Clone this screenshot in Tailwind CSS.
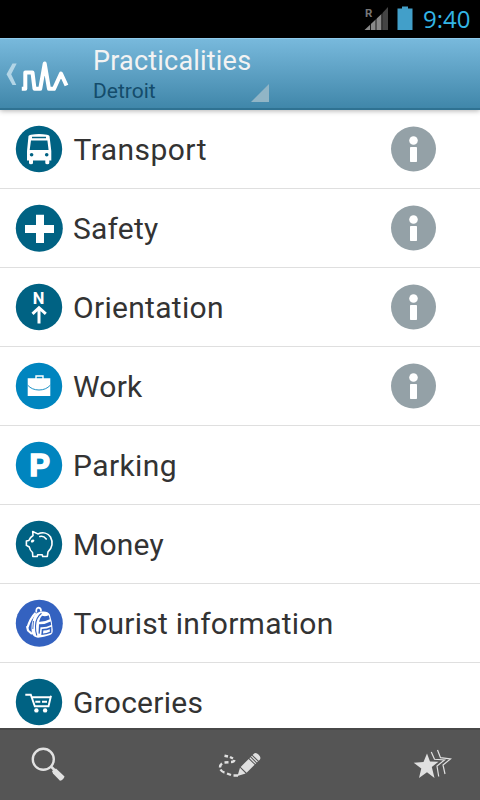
<!DOCTYPE html>
<html lang="en">
<head>
<meta charset="utf-8">
<title>Practicalities</title>
<script src="https://cdn.jsdelivr.net/npm/@tailwindcss/browser@4"></script>
</head>
<body class="bg-white">
<div class="flex h-[800px] w-[480px] flex-col overflow-hidden bg-white font-[Roboto,sans-serif] text-[#333]">
  <div class="flex h-[38px] shrink-0 items-center justify-end bg-black pr-[9px]">
    <svg class="h-[38px] w-[60px]" viewBox="360 0 60 38">
      <text x="365" y="17" font-family="Roboto" font-weight="700" font-size="11.500" fill="#777">R</text>
      <path d="M364.500 30L382 13.500V30Z" fill="#888"/><path d="M382 13.500L388 7V30H382Z" fill="#444"/>
      <path d="M370.500 20v11M376 15v16M381.800 9v22" stroke="#000" stroke-width=".8"/>
      <path d="M397.500 8.500h4.500v-2h6v2h4.500v21.500h-15z" fill="#429fc9"/>
    </svg>
    <span class="ml-[3px] w-[48px] font-['Open_Sans',sans-serif] text-[24px] leading-[36px] whitespace-nowrap text-[#33b5e5]">9:40</span>
  </div>

  <header class="relative z-10 flex h-[72px] shrink-0 border-t border-b-2 border-t-[#8fcaec] border-b-[#2f7292] bg-linear-to-b from-[#78b9dc] to-[#4087aa] shadow-[0_1px_5px_rgba(0,0,0,0.3)]">
    <svg class="-mt-px h-[72px] w-[93px] shrink-0" viewBox="0 0 93 72">
      <path d="M12.500 25.500H16.700L11.200 36.300L16.300 47H12.500L6.500 36.300Z" fill="#b3d5e6"/>
      <path d="M21.800 50.800H25.300V34.500H32.500L34.500 50.800H40.200L44.700 25.500L49 50.800H54L61 35.500L66.500 47.500" fill="none" stroke="#fff" stroke-width="4" stroke-linejoin="round"/>
    </svg>
    <div class="flex w-[158px] flex-col">
      <h1 class="mt-[5px] whitespace-nowrap text-[27px] leading-[34px] tracking-[0.2px] text-[#f3f3f3]">Practicalities</h1>
      <p class="mt-px text-[21px] leading-[25px] text-[#144c6b]">Detroit</p>
    </div>
    <svg class="mt-[45px] h-[18px] w-[18px]" viewBox="0 0 18 18"><path d="M0 18L18 0V18Z" fill="#91b5c6"/></svg>
  </header>

  <main class="flex-1 overflow-hidden text-[30px]">
    <div class="flex h-[79px] items-center border-b border-[#dfdfdf] pr-[43px] pl-[15px]">
      <svg class="size-12" viewBox="0 0 48 48"><circle cx="24" cy="24" r="23.200" fill="#006283"/>
        <path fill="#fff" fill-rule="evenodd" d="M13.500 11Q14 10 16 9.700Q24 8.300 32 9.700Q34 10 34.500 11L36.300 26V35.500H34.300V38Q34.300 39.300 32.300 39.300Q30.300 39.300 30.300 38V35.500H18V38Q18 39.300 16 39.300Q14 39.300 14 38V35.500H12V26ZM17 11.800V13.300H31V11.800ZM16 15.500L14.700 25H33.600L32.400 15.500Z"/>
        <circle cx="16.600" cy="29.700" r="1.800" fill="#006283"/><circle cx="31.700" cy="29.700" r="1.800" fill="#006283"/></svg>
      <span class="ml-[10.500px] flex-1 tracking-[0.450px]">Transport</span>
      <svg class="size-[46px]" viewBox="0 0 46 46"><circle cx="22.500" cy="23" r="22.500" fill="#94a1a7"/><circle cx="22.500" cy="14.500" r="4.300" fill="#fff"/><rect x="19" y="21" width="7" height="15" rx=".7" fill="#fff"/></svg>
    </div>
    <div class="flex h-[79px] items-center border-b border-[#dfdfdf] pr-[43px] pl-[15px]">
      <svg class="size-12" viewBox="0 0 48 48"><circle cx="24.300" cy="24.300" r="23.500" fill="#006283"/><path d="M21 10.700h8V21h10v8H29v10h-8V29H10v-8h11z" fill="#fff"/></svg>
      <span class="ml-[10px] flex-1 tracking-[0.2px]">Safety</span>
      <svg class="size-[46px]" viewBox="0 0 46 46"><circle cx="22.500" cy="23" r="22.500" fill="#94a1a7"/><circle cx="22.500" cy="14.500" r="4.300" fill="#fff"/><rect x="19" y="21" width="7" height="15" rx=".7" fill="#fff"/></svg>
    </div>
    <div class="flex h-[79px] items-center border-b border-[#dfdfdf] pr-[43px] pl-[15px]">
      <svg class="size-12" viewBox="0 0 48 48"><circle cx="24" cy="24" r="23.200" fill="#006283"/>
        <text x="23.700" y="20.700" text-anchor="middle" font-family="Roboto" font-weight="700" font-size="16.500" fill="#fff">N</text>
        <path d="M24 40.500V25M17.500 30.800L24 24.700L30.800 30.800" fill="none" stroke="#fff" stroke-width="3"/></svg>
      <span class="ml-[10px] flex-1 tracking-[0.3px]">Orientation</span>
      <svg class="size-[46px]" viewBox="0 0 46 46"><circle cx="22.500" cy="23" r="22.500" fill="#94a1a7"/><circle cx="22.500" cy="14.500" r="4.300" fill="#fff"/><rect x="19" y="21" width="7" height="15" rx=".7" fill="#fff"/></svg>
    </div>
    <div class="flex h-[79px] items-center border-b border-[#dfdfdf] pr-[43px] pl-[15px]">
      <svg class="size-12" viewBox="0 0 48 48"><circle cx="24" cy="24" r="23.200" fill="#0085bf"/>
        <path fill="#fff" fill-rule="evenodd" d="M12.700 16.300H20.300V13.300H28.700V16.300H35.300V34H12.700ZM21.700 14.700V16.300H27.300V14.700Z"/>
        <path d="M12.700 23.200Q17 28 24 28T35.300 23.200" fill="none" stroke="#0085bf" stroke-width=".9"/></svg>
      <span class="ml-[10px] flex-1 tracking-[0.2px]">Work</span>
      <svg class="size-[46px]" viewBox="0 0 46 46"><circle cx="22.500" cy="23" r="22.500" fill="#94a1a7"/><circle cx="22.500" cy="14.500" r="4.300" fill="#fff"/><rect x="19" y="21" width="7" height="15" rx=".7" fill="#fff"/></svg>
    </div>
    <div class="flex h-[79px] items-center border-b border-[#dfdfdf] pr-[43px] pl-[15px]">
      <svg class="size-12" viewBox="0 0 48 48"><circle cx="24" cy="24" r="23.200" fill="#0085bf"/>
        <text x="14.500" y="35.300" font-family="Liberation Sans" font-weight="700" font-size="30.500" fill="#fff" stroke="#fff" stroke-width="1.700">P</text></svg>
      <span class="ml-[10px] flex-1 tracking-[0.4px]">Parking</span>
    </div>
    <div class="flex h-[79px] items-center border-b border-[#dfdfdf] pr-[43px] pl-[15px]">
      <svg class="size-12" viewBox="0 0 48 48"><circle cx="24" cy="24" r="23.200" fill="#006283"/>
        <g fill="none" stroke="#fff" stroke-width="1.600" stroke-linejoin="round" stroke-linecap="round">
        <path d="M17.700 11.500L22.800 13.900C28 11.800 33 13 35.500 17C38.200 22 37.500 28 33 31.800L32.300 36.500H27.700L27.200 34.700H22.700L22.200 36.500H17.800L17.500 32.500C15.800 31 14.600 29.200 14.300 27L11.400 25.400V21L13.800 20.500C14.600 18.500 16 16.800 18 15.500Z"/>
        <path d="M24.800 16.500Q28.500 15.500 31.200 19"/></g><ellipse cx="17.600" cy="21" rx="1.900" ry="1.300" transform="rotate(-30 17.600 21)" fill="#fff"/></svg>
      <span class="ml-[10px] flex-1 tracking-[0.2px]">Money</span>
    </div>
    <div class="flex h-[79px] items-center border-b border-[#dfdfdf] pr-[43px] pl-[15px]">
      <svg class="size-12" viewBox="0 0 48 48"><circle cx="24.300" cy="24.300" r="23.500" fill="#3462c0"/>
        <path d="M21.300 13.500Q20.800 8.600 23.700 8.600Q26.300 9 26 12.500" fill="none" stroke="#fff" stroke-width="1.700"/>
        <path d="M20.500 14Q15.500 19 12.500 28.500M12 27L13 31.500L17 35" fill="none" stroke="#fff" stroke-width="2.200"/>
        <path d="M19.500 16.500Q22 12.800 27 12.500Q33 12 34.800 15.500Q37.300 23 37.700 30.500Q38 35 35 36Q29 38 23 38.700Q19 38.500 16.800 34.500Q15.500 24 19.500 16.500Z" fill="#fff"/>
        <g fill="none" stroke="#3462c0"><path d="M26.500 14.300Q20.800 18.500 20.500 27Q20.300 33 21.800 36.500" stroke-width="1.100"/>
        <path d="M18.500 22L17.800 30" stroke-width=".9"/></g>
        <path d="M27 16.800Q30.500 18 33.700 16.200L34.800 20.300Q30 23 24 22.700Q24.800 19 27 16.800ZM24 25.300Q30.500 25.500 35.600 22.600L36.200 26Q31 28.700 25.500 28.300L24.700 34.800L23.500 34.500Z" fill="#3462c0"/>
        <path d="M26.800 30Q32 30 36.300 27.800V33.700Q32 35.700 26.300 36Z" fill="#3462c0"/><path d="M28.300 31.500Q32 31.400 34.800 30.200V32.800Q31.500 34.200 28 34.500Z" fill="#fff"/></svg>
      <span class="ml-[10.500px] flex-1 tracking-[0.250px]">Tourist information</span>
    </div>
    <div class="flex h-[79px] items-center border-b border-[#dfdfdf] pr-[43px] pl-[15px]">
      <svg class="size-12" viewBox="0 0 48 48"><circle cx="24" cy="24" r="23.200" fill="#006283"/>
        <path d="M10.300 16.700H15.800L19.800 28.300H33.500L36 17.800M17 19.300H35" fill="none" stroke="#fff" stroke-width="1.900"/>
        <path d="M20.300 23.800H25.300M27 23.800H32" stroke="#fff" stroke-width="2"/>
        <circle cx="21.400" cy="32.400" r="2.200" fill="#fff"/><circle cx="30.100" cy="32.400" r="2.200" fill="#fff"/></svg>
      <span class="ml-[10px] flex-1 tracking-[0.250px]">Groceries</span>
    </div>
  </main>

  <footer class="z-10 flex h-[72px] shrink-0 items-center justify-between border-t-2 border-[#484848] bg-[#555] pr-[28px] pl-[30px]">
    <svg class="h-[36px] w-[36px]" viewBox="30 747 36 36">
      <circle cx="43.300" cy="759.300" r="10.500" fill="none" stroke="#e2e2e2" stroke-width="2.400"/>
      <path d="M51 766.500L55 770.500" stroke="#e2e2e2" stroke-width="2.500"/><path d="M52 771L56 768.500L64.500 776.500Q63.500 780 60 780.800L53 773.500Z" fill="#e2e2e2"/></svg>
    <svg class="h-[36px] w-[46px]" viewBox="217 747 46 36">
      <path d="M225.500 755.800L229 756.500M231 757L234 758.500M235.500 760Q235 762 232 762M229.500 762.300L225.500 762.500M223 763.500Q221 765 221 767.500M221.500 769.500Q223 772 225.500 772.500M228 773.500L232 775M234.500 775.500H239" fill="none" stroke="#e0e0e0" stroke-width="2.400"/>
      <g transform="translate(238.500 776) rotate(-45)" fill="#e0e0e0"><path d="M0 0L7.500 -4V4ZM8.700 -4.200H20V4.200H8.700ZM21 -4.200H22.300V4.200H21ZM23.300 -4.200H24.600V4.200H23.300ZM25.600 -4.200H27Q30 -4.200 30 0Q30 4.200 27 4.200H25.600Z"/></g></svg>
    <svg class="h-[36px] w-[40px]" viewBox="412 747 40 36">
      <path d="M427 753.500L430 761.500L438.500 761.700L431.800 767L434.500 778L427 772.200L419 778L421.300 768.500L413.700 762.800L423.500 762Z" fill="#e0e0e0"/>
      <path d="M431.300 752L434.500 759.300L444.500 760L437 766L438.700 776.500M437.500 750L440.500 757.700L450.500 759L443 765L445 774" fill="none" stroke="#e0e0e0" stroke-width="1.200"/></svg>
  </footer>
</div>
</body>
</html>
